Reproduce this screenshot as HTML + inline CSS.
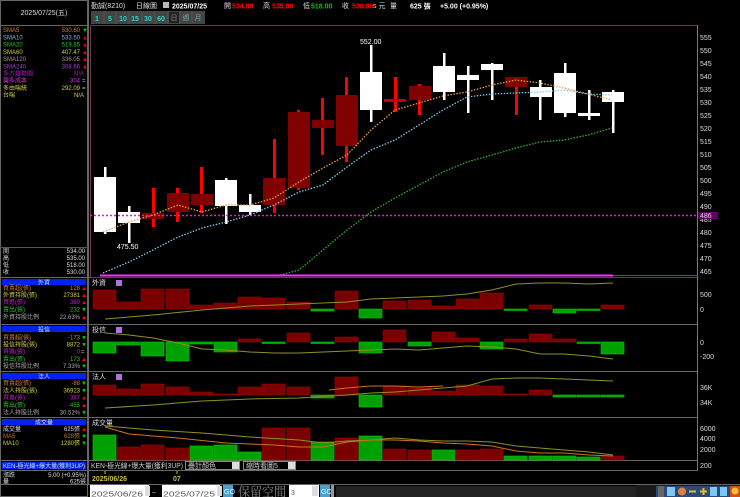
<!DOCTYPE html>
<html><head><meta charset="utf-8"><style>
html,body{margin:0;padding:0;background:#000;width:740px;height:497px;overflow:hidden}
svg{display:block}
text{font-family:"Liberation Sans","Noto Sans CJK TC",sans-serif;font-size:7px}
.r{fill:#7a0000;stroke:#a00000;stroke-width:.6}
.g{fill:#00a000;stroke:#00cc00;stroke-width:.6}
.w{fill:#fff}
.rw{fill:#f00}
.ax{fill:#ddd;font-size:7.5px}
.lt{fill:#ddd}
.lp text{font-size:6px}
</style></head><body>
<svg width="740" height="497" viewBox="0 0 740 497" xmlns="http://www.w3.org/2000/svg">
<rect width="740" height="497" fill="#000"/>
<rect x="0.5" y="0.5" width="87" height="496" fill="none" stroke="#666"/>
<line x1="0" y1="25.5" x2="88" y2="25.5" stroke="#666"/>
<text x="44" y="15" text-anchor="middle" class="lt">2025/07/25(五)</text>
<g class="lp">
<text x="3" y="32" fill="#d08030">SMA5</text><text x="80" y="32" text-anchor="end" fill="#d08030">530.60</text><text x="82" y="32" fill="#0c0">▼</text>
<text x="3" y="39.5" fill="#80b8e0">SMA10</text><text x="80" y="39.5" text-anchor="end" fill="#80b8e0">533.50</text><text x="82" y="39.5" fill="#f00">▲</text>
<text x="3" y="46.5" fill="#30c030">SMA20</text><text x="80" y="46.5" text-anchor="end" fill="#30c030">519.85</text><text x="82" y="46.5" fill="#f00">▲</text>
<text x="3" y="54" fill="#d0d040">SMA60</text><text x="80" y="54" text-anchor="end" fill="#d0d040">407.47</text><text x="82" y="54" fill="#f00">▲</text>
<text x="3" y="61" fill="#b09090">SMA120</text><text x="80" y="61" text-anchor="end" fill="#b09090">336.05</text><text x="82" y="61" fill="#f00">▲</text>
<text x="3" y="68.5" fill="#a040d0">SMA240</text><text x="80" y="68.5" text-anchor="end" fill="#a040d0">308.66</text><text x="82" y="68.5" fill="#f00">▲</text>
<text x="3" y="75.5" fill="#a020c0">多方趨勢圖</text><text x="84" y="75.5" text-anchor="end" fill="#a020c0">N/A</text>
<text x="3" y="82.5" fill="#d030d0">籌多成本</text><text x="80" y="82.5" text-anchor="end" fill="#d030d0">304</text><text x="82" y="82.5" fill="#ccc">=</text>
<text x="3" y="90" fill="#d0d040">多由喘統</text><text x="80" y="90" text-anchor="end" fill="#d0d040">292.09</text><text x="82" y="90" fill="#ccc">=</text>
<text x="3" y="97" fill="#d0d040">台喘</text><text x="84" y="97" text-anchor="end" fill="#d0d040">N/A</text>
<text x="3" y="253" fill="#ddd">開</text><text x="85" y="253" text-anchor="end" fill="#ddd">534.00</text>
<text x="3" y="260" fill="#ddd">高</text><text x="85" y="260" text-anchor="end" fill="#ddd">535.00</text>
<text x="3" y="267" fill="#ddd">低</text><text x="85" y="267" text-anchor="end" fill="#ddd">518.00</text>
<text x="3" y="274" fill="#ddd">收</text><text x="85" y="274" text-anchor="end" fill="#ddd">530.00</text>
</g>
<line x1="0" y1="247.5" x2="88" y2="247.5" stroke="#555"/>
<g stroke="#666">
<line x1="0" y1="277.5" x2="698" y2="277.5"/>
<line x1="0" y1="324.5" x2="698" y2="324.5"/>
<line x1="0" y1="371.5" x2="698" y2="371.5"/>
<line x1="0" y1="417.5" x2="698" y2="417.5"/>
<line x1="0" y1="460.5" x2="698" y2="460.5"/>
<line x1="0" y1="470.5" x2="698" y2="470.5"/>
<line x1="0" y1="484.5" x2="740" y2="484.5"/>
</g>
<g class="lp">
<rect x="2" y="279" width="84" height="6" fill="#0022ee"/><text x="44" y="284.5" text-anchor="middle" fill="#ddd">外資</text>
<text x="3" y="290" fill="#d08030">買賣超(張)</text><text x="80" y="290" text-anchor="end" fill="#d08030">128</text><text x="81" y="290" fill="#f00">▲</text>
<text x="3" y="297" fill="#d0d040">外資持股(張)</text><text x="80" y="297" text-anchor="end" fill="#d0d040">27381</text><text x="81" y="297" fill="#f00">▲</text>
<text x="3" y="304" fill="#c020c0">買進(張)</text><text x="80" y="304" text-anchor="end" fill="#c020c0">360</text><text x="81" y="304" fill="#f00">▲</text>
<text x="3" y="311.5" fill="#30c030">賣出(張)</text><text x="80" y="311.5" text-anchor="end" fill="#30c030">232</text><text x="81" y="311.5" fill="#0c0">▼</text>
<text x="3" y="319" fill="#aaa">外資持股比例</text><text x="80" y="319" text-anchor="end" fill="#aaa">22.63%</text><text x="81" y="319" fill="#f00">▲</text>

<rect x="2" y="326" width="84" height="6" fill="#0022ee"/><text x="44" y="331.5" text-anchor="middle" fill="#ddd">投信</text>
<text x="3" y="339.5" fill="#d08030">買賣超(張)</text><text x="80" y="339.5" text-anchor="end" fill="#d08030">-173</text><text x="81" y="339.5" fill="#0c0">▼</text>
<text x="3" y="346.5" fill="#d0d040">投信持股(張)</text><text x="80" y="346.5" text-anchor="end" fill="#d0d040">8872</text><text x="81" y="346.5" fill="#0c0">▼</text>
<text x="3" y="353.5" fill="#c020c0">買進(張)</text><text x="80" y="353.5" text-anchor="end" fill="#c020c0">0</text><text x="81" y="353.5" fill="#ccc">=</text>
<text x="3" y="361" fill="#30c030">賣出(張)</text><text x="80" y="361" text-anchor="end" fill="#30c030">173</text><text x="81" y="361" fill="#f00">▲</text>
<text x="3" y="368" fill="#aaa">投信持股比例</text><text x="80" y="368" text-anchor="end" fill="#aaa">7.33%</text><text x="81" y="368" fill="#0c0">▼</text>

<rect x="2" y="373" width="84" height="6" fill="#0022ee"/><text x="44" y="378.5" text-anchor="middle" fill="#ddd">法人</text>
<text x="3" y="385" fill="#d08030">買賣超(張)</text><text x="80" y="385" text-anchor="end" fill="#d08030">-88</text><text x="81" y="385" fill="#0c0">▼</text>
<text x="3" y="392.5" fill="#d0d040">法人持股(張)</text><text x="80" y="392.5" text-anchor="end" fill="#d0d040">36923</text><text x="81" y="392.5" fill="#0c0">▼</text>
<text x="3" y="399.5" fill="#c020c0">買進(張)</text><text x="80" y="399.5" text-anchor="end" fill="#c020c0">367</text><text x="81" y="399.5" fill="#f00">▲</text>
<text x="3" y="407" fill="#30c030">賣出(張)</text><text x="80" y="407" text-anchor="end" fill="#30c030">455</text><text x="81" y="407" fill="#f00">▲</text>
<text x="3" y="414.5" fill="#aaa">法人持股比例</text><text x="80" y="414.5" text-anchor="end" fill="#aaa">30.52%</text><text x="81" y="414.5" fill="#0c0">▼</text>

<rect x="2" y="419" width="84" height="6" fill="#0022ee"/><text x="44" y="424.5" text-anchor="middle" fill="#ddd">成交量</text>
<text x="3" y="431" fill="#ddd">成交量</text><text x="80" y="431" text-anchor="end" fill="#ddd">625張</text><text x="81" y="431" fill="#f00">▲</text>
<text x="3" y="438" fill="#d07020">MA5</text><text x="80" y="438" text-anchor="end" fill="#d07020">628張</text><text x="81" y="438" fill="#0c0">▼</text>
<text x="3" y="445" fill="#d0d040">MA10</text><text x="80" y="445" text-anchor="end" fill="#d0d040">1280張</text><text x="81" y="445" fill="#0c0">▼</text>

<rect x="2" y="462" width="84" height="7" fill="#0022ee"/><text x="3" y="468" fill="#ddd" textLength="82" lengthAdjust="spacingAndGlyphs">KEN-極光線+爆大量(獲利3UP)</text>
<text x="3" y="477" fill="#ddd">漲跌</text><text x="86" y="477" text-anchor="end" fill="#ddd">5.00 (+0.95%)</text>
<text x="3" y="483.5" fill="#ddd">量</text><text x="86" y="483.5" text-anchor="end" fill="#ddd">625張</text>
</g>
<line x1="88.5" y1="0" x2="88.5" y2="484" stroke="#666"/>

<text x="91" y="8" fill="#ddd">勤誠(8210)</text>
<text x="136" y="8" fill="#ddd">日線圖</text>
<rect x="163" y="2" width="6" height="6" fill="#bbb"/>
<text x="172" y="8.5" fill="#fff" font-weight="bold" font-size="9">2025/07/25</text>
<text x="224" y="8" fill="#ddd">開</text><text x="232" y="8.5" fill="#f00" font-weight="bold" font-size="8.5">534.00</text>
<text x="263" y="8" fill="#ddd">高</text><text x="272" y="8.5" fill="#f00" font-weight="bold" font-size="8.5">535.00</text>
<text x="303" y="8" fill="#ddd">低</text><text x="311" y="8.5" fill="#0c0" font-weight="bold" font-size="8.5">518.00</text>
<text x="342" y="8" fill="#ddd">收</text><text x="352" y="8.5" fill="#f00" font-weight="bold" font-size="8.5">530.00</text>
<text x="373" y="8" fill="#ddd">s 元</text><text x="390" y="8" fill="#ddd">量</text>
<text x="410" y="8.5" fill="#fff" font-weight="bold" font-size="8.5">625 張</text>
<text x="440" y="8.5" fill="#fff" font-weight="bold" font-size="8.5">+5.00 (+0.95%)</text>
<rect x="91" y="11" width="114" height="13" fill="#444"/>
<g fill="#3cc" font-size="8" font-weight="bold" text-anchor="middle">
<text x="97" y="21">1</text><text x="110" y="21">5</text><text x="123" y="21">10</text><text x="135" y="21">15</text><text x="148" y="21">30</text><text x="161" y="21">60</text>
</g>
<rect x="169" y="12" width="10" height="11" fill="#222"/><text x="174" y="20" text-anchor="middle" fill="#888" font-size="5">日</text>
<text x="186" y="20" text-anchor="middle" fill="#6aa" font-size="6">週</text><text x="198" y="20" text-anchor="middle" fill="#6aa" font-size="6">月</text>
<g stroke="#555"><line x1="104" y1="11" x2="104" y2="24"/><line x1="116" y1="11" x2="116" y2="24"/><line x1="129" y1="11" x2="129" y2="24"/><line x1="142" y1="11" x2="142" y2="24"/><line x1="155" y1="11" x2="155" y2="24"/><line x1="168" y1="11" x2="168" y2="24"/><line x1="180" y1="11" x2="180" y2="24"/><line x1="192" y1="11" x2="192" y2="24"/></g>

<rect x="90.5" y="25.5" width="607" height="252" fill="none" stroke="#6a3a4a"/>
<line x1="697.5" y1="25" x2="697.5" y2="470" stroke="#777"/>
<g class="ax">
<text x="700" y="40">555</text><text x="700" y="53">550</text><text x="700" y="66">545</text><text x="700" y="79">540</text><text x="700" y="92">535</text><text x="700" y="105">530</text><text x="700" y="118">525</text><text x="700" y="131">520</text><text x="700" y="144">515</text><text x="700" y="157">510</text><text x="700" y="170">505</text><text x="700" y="183">500</text><text x="700" y="196">495</text><text x="700" y="209">490</text><text x="700" y="222">485</text><text x="700" y="235">480</text><text x="700" y="248">475</text><text x="700" y="261">470</text><text x="700" y="274">465</text>
</g>
<rect x="698" y="212" width="20" height="7" fill="#600060"/><text x="700" y="218" fill="#ddd" font-size="7">486</text>

<g>
<rect class="w" x="104" y="167" width="2.5" height="67"/>
<rect class="w" x="128" y="206" width="2.5" height="37"/>
<rect class="rw" x="152" y="188" width="3" height="39"/>
<rect class="rw" x="176" y="188" width="3" height="34"/>
<rect class="rw" x="200" y="167" width="3" height="46"/>
<rect class="w" x="225" y="178" width="2.5" height="46"/>
<rect class="w" x="249" y="194" width="2.5" height="21"/>
<rect class="rw" x="273" y="139" width="3" height="74"/>
<rect class="rw" x="297" y="110" width="3" height="80"/>
<rect class="rw" x="321" y="98" width="3" height="57"/>
<rect class="rw" x="345" y="77" width="3" height="85"/>
<rect class="w" x="370" y="45" width="2.5" height="77"/>
<rect class="rw" x="394" y="77" width="3" height="35"/>
<rect class="rw" x="418" y="84" width="3" height="31"/>
<rect class="w" x="443" y="53" width="2.5" height="47"/>
<rect class="w" x="467" y="66" width="2.5" height="47"/>
<rect class="w" x="491" y="63" width="2.5" height="37"/>
<rect class="rw" x="515" y="77" width="3" height="38"/>
<rect class="w" x="539" y="80" width="2.5" height="40"/>
<rect class="w" x="564" y="63" width="2.5" height="54"/>
<rect class="w" x="588" y="90" width="2.5" height="30"/>
<rect class="w" x="612" y="90" width="2.5" height="43"/>
</g>
<g>
<rect class="w" x="94" y="177" width="22" height="55"/>
<rect class="w" x="118" y="212" width="22" height="11"/>
<rect fill="#800000" x="142" y="213" width="22" height="6"/>
<rect fill="#800000" x="167" y="193" width="22" height="19"/>
<rect fill="#800000" x="191" y="194" width="22" height="11"/>
<rect class="w" x="215" y="180" width="22" height="26"/>
<rect class="w" x="239" y="205" width="22" height="7"/>
<rect fill="#800000" x="263" y="178" width="22" height="27"/>
<rect fill="#800000" x="288" y="112" width="22" height="76"/>
<rect fill="#800000" x="312" y="120" width="22" height="8"/>
<rect fill="#800000" x="336" y="95" width="22" height="51"/>
<rect class="w" x="360" y="72" width="22" height="38"/>
<rect fill="#c00000" x="384" y="99" width="22" height="3"/>
<rect fill="#800000" x="409" y="86" width="22" height="14"/>
<rect class="w" x="433" y="66" width="22" height="26"/>
<rect class="w" x="457" y="75" width="22" height="5"/>
<rect class="w" x="481" y="64" width="22" height="6"/>
<rect fill="#800000" x="505" y="77" width="22" height="10"/>
<rect class="w" x="530" y="87" width="22" height="10"/>
<rect class="w" x="554" y="73" width="22" height="40"/>
<rect class="w" x="578" y="113" width="22" height="3"/>
<rect class="w" x="602" y="92" width="22" height="10"/>
</g>
<text x="360" y="44" fill="#fff" font-size="7.5">552.00</text>
<text x="117" y="249" fill="#fff" font-size="7.5">475.50</text>
<line x1="90" y1="215.5" x2="698" y2="215.5" stroke="#e020c0" stroke-width="1.6" stroke-dasharray="2,2"/>
<polyline fill="none" stroke="#e8a040" stroke-width="1.3" stroke-dasharray="1.5,1.5" points="103,232 129,222 153,215 178,205 202,212 226,205 250,205 274,198 299,182 323,168 347,155 371,130 395,110 419,103 443,96 467,92 492,85 516,80 540,83 564,88 588,94 612,100"/>
<polyline fill="none" stroke="#80c8e8" stroke-width="1.3" stroke-dasharray="1.5,1.5" points="103,273 129,262 153,250 178,237 202,228 226,222 250,215 274,205 299,192 323,185 347,167 371,150 395,140 419,125 443,110 467,97 492,94 516,93 540,92 564,90 588,94 612,95"/>
<polyline fill="none" stroke="#30b030" stroke-width="1.3" stroke-dasharray="1.5,1.5" points="280,275 299,270 323,250 347,230 371,212 395,198 419,185 443,172 467,162 492,155 516,148 540,142 564,140 588,135 612,128"/>
<line x1="100" y1="275.5" x2="613" y2="275.5" stroke="#ff30ff" stroke-width="2"/>
<line x1="613" y1="275.5" x2="698" y2="275.5" stroke="#a020a0" stroke-width="1"/>

<g fill="#ddd" font-size="6.5">
<text x="92" y="285">外資</text><text x="92" y="332">投信</text><text x="92" y="379">法人</text><text x="92" y="425">成交量</text>
</g>
<rect x="116" y="280" width="6" height="6" fill="#b070e0"/>
<rect x="116" y="327" width="6" height="6" fill="#b070e0"/>
<rect x="116" y="374" width="6" height="6" fill="#b070e0"/>

<g>
<rect class="r" x="93" y="290" width="23" height="19"/>
<rect class="r" x="117" y="302" width="23" height="7"/>
<rect class="r" x="141" y="289" width="23" height="20"/>
<rect class="r" x="166" y="289" width="23" height="20"/>
<rect class="r" x="190" y="305" width="23" height="4"/>
<rect class="r" x="214" y="303" width="23" height="6"/>
<rect class="r" x="238" y="297" width="23" height="12"/>
<rect class="r" x="262" y="298" width="23" height="11"/>
<rect class="r" x="287" y="302" width="23" height="7"/>
<rect class="g" x="311" y="309" width="23" height="2"/>
<rect class="r" x="335" y="291" width="23" height="18"/>
<rect class="g" x="359" y="309" width="23" height="9"/>
<rect class="r" x="383" y="301" width="23" height="8"/>
<rect class="r" x="408" y="300" width="23" height="9"/>
<rect class="r" x="432" y="306" width="23" height="3"/>
<rect class="r" x="456" y="299" width="23" height="10"/>
<rect class="r" x="480" y="293" width="23" height="16"/>
<rect class="g" x="504" y="309" width="23" height="1.5"/>
<rect class="r" x="529" y="305" width="23" height="4"/>
<rect class="g" x="553" y="309" width="23" height="4"/>
<rect class="g" x="577" y="309" width="23" height="1.5"/>
<rect class="r" x="601" y="305" width="23" height="4"/>
</g>
<polyline fill="none" stroke="#909020" stroke-width="1" points="105,319 153,315 202,310 250,306 299,304 347,302 371,299 395,298 443,296 467,294 492,290 516,284 540,283 564,283 589,284 613,283"/>
<g>
<rect class="g" x="93" y="342" width="23" height="11"/>
<rect class="g" x="117" y="342" width="23" height="3"/>
<rect class="g" x="141" y="342" width="23" height="14"/>
<rect class="g" x="166" y="342" width="23" height="19"/>
<rect class="g" x="190" y="342" width="23" height="2"/>
<rect class="g" x="214" y="342" width="23" height="10"/>
<rect class="r" x="238" y="339" width="23" height="3"/>
<rect class="g" x="262" y="342" width="23" height="1.5"/>
<rect class="r" x="287" y="333" width="23" height="9"/>
<rect class="g" x="311" y="342" width="23" height="1.5"/>
<rect class="r" x="335" y="337" width="23" height="5"/>
<rect class="g" x="359" y="342" width="23" height="11"/>
<rect class="r" x="383" y="330" width="23" height="12"/>
<rect class="g" x="408" y="342" width="23" height="4"/>
<rect class="r" x="432" y="332" width="23" height="10"/>
<rect class="r" x="456" y="338" width="23" height="4"/>
<rect class="g" x="480" y="342" width="23" height="7"/>
<rect class="r" x="504" y="339" width="23" height="3"/>
<rect class="r" x="529" y="334" width="23" height="8"/>
<rect class="r" x="553" y="339" width="23" height="3"/>
<rect class="g" x="577" y="342" width="23" height="1.5"/>
<rect class="g" x="601" y="342" width="23" height="12"/>
</g>
<polyline fill="none" stroke="#909020" stroke-width="1" points="105,333 129,335 153,338 178,343 202,349 226,350 250,352 274,353 299,353 323,352 347,351 371,350 395,349 419,350 443,348 467,346 492,347 516,349 540,354 564,354 589,356 613,359"/>
<g>
<rect class="r" x="93" y="385" width="23" height="10"/>
<rect class="r" x="117" y="389" width="23" height="6"/>
<rect class="r" x="141" y="384" width="23" height="11"/>
<rect class="r" x="166" y="387" width="23" height="8"/>
<rect class="r" x="190" y="392" width="23" height="3"/>
<rect class="r" x="214" y="394" width="23" height="1"/>
<rect class="r" x="238" y="387" width="23" height="8"/>
<rect class="r" x="262" y="384" width="23" height="11"/>
<rect class="r" x="287" y="387" width="23" height="8"/>
<rect class="g" x="311" y="395" width="23" height="3"/>
<rect class="r" x="335" y="377" width="23" height="18"/>
<rect class="g" x="359" y="395" width="23" height="12"/>
<rect class="r" x="383" y="386" width="23" height="9"/>
<rect class="r" x="408" y="388" width="23" height="7"/>
<rect class="r" x="432" y="391" width="23" height="4"/>
<rect class="r" x="456" y="385" width="23" height="10"/>
<rect class="r" x="480" y="386" width="23" height="9"/>
<rect class="r" x="504" y="394" width="23" height="1"/>
<rect class="r" x="529" y="390" width="23" height="5"/>
<rect class="g" x="553" y="395" width="23" height="2"/>
<rect class="g" x="577" y="395" width="23" height="2"/>
<rect class="g" x="601" y="395" width="23" height="2"/>
</g>
<polyline fill="none" stroke="#909020" stroke-width="1" points="105,408 153,405 202,401 250,399 299,398 347,395 371,393 395,392 419,390 443,388 467,386 492,379 516,378 540,378 564,379 589,380 613,381"/>
<polyline fill="none" stroke="#d07020" stroke-width="1" points="329,390 347,388 371,386 395,386 419,387 443,386"/>
<g>
<rect class="g" x="93" y="435" width="23" height="25"/>
<rect class="r" x="117" y="447" width="23" height="13"/>
<rect class="r" x="141" y="445" width="23" height="15"/>
<rect class="r" x="166" y="448" width="23" height="12"/>
<rect class="g" x="190" y="446" width="23" height="14"/>
<rect class="g" x="214" y="445" width="23" height="15"/>
<rect class="g" x="238" y="452" width="23" height="8"/>
<rect class="r" x="262" y="428" width="23" height="32"/>
<rect class="r" x="287" y="428" width="23" height="32"/>
<rect class="g" x="311" y="442" width="23" height="18"/>
<rect class="r" x="335" y="438" width="23" height="22"/>
<rect class="g" x="359" y="436" width="23" height="24"/>
<rect class="r" x="383" y="449" width="23" height="11"/>
<rect class="r" x="408" y="450" width="23" height="10"/>
<rect class="g" x="432" y="450" width="23" height="10"/>
<rect class="r" x="456" y="450" width="23" height="10"/>
<rect class="r" x="480" y="449" width="23" height="11"/>
<rect class="g" x="504" y="456" width="23" height="4"/>
<rect class="g" x="529" y="456" width="23" height="4"/>
<rect class="g" x="553" y="456" width="23" height="4"/>
<rect class="g" x="577" y="457" width="23" height="3"/>
<rect class="r" x="601" y="456" width="23" height="4"/>
</g>
<polyline fill="none" stroke="#909020" stroke-width="1" points="105,426 153,430 202,433 250,437 299,440 323,443 347,441 371,440 395,438 419,440 443,441 467,441 492,442 516,446 540,448 564,450 589,452 613,455"/>
<polyline fill="none" stroke="#d07020" stroke-width="1" points="105,427 129,434 178,438 226,443 274,445 299,447 323,447 347,442 371,440 395,440 419,441 443,443 467,444 492,446 516,451 540,453 564,453 589,455 613,456"/>
<g class="ax">
<text x="700" y="297">500</text><text x="700" y="312">0</text>
<text x="700" y="345">0</text><text x="700" y="359">-200</text>
<text x="700" y="390">36K</text><text x="700" y="405">34K</text>
<text x="700" y="431">6000</text><text x="700" y="441">4000</text><text x="700" y="452">2000</text><text x="700" y="468">200</text>
</g>
<text x="91" y="468" fill="#ccc" font-size="6" textLength="92" lengthAdjust="spacingAndGlyphs">KEN-極光線+爆大量(獲利3UP)</text>
<rect x="185.5" y="461.5" width="54" height="8" fill="#000" stroke="#888"/><text x="188" y="468" fill="#ccc" font-size="6">疊計顏色</text><rect x="232" y="462" width="7" height="7" fill="#ddd"/>
<rect x="243.5" y="461.5" width="52" height="8" fill="#000" stroke="#888"/><text x="246" y="468" fill="#ccc" font-size="6">縮時看圖5</text><rect x="288" y="462" width="7" height="7" fill="#ddd"/>
<line x1="105" y1="471" x2="105" y2="474" stroke="#cc0"/><line x1="177" y1="471" x2="177" y2="474" stroke="#cc0"/>
<text x="92" y="481" fill="#c8c040" font-size="7.5" font-weight="bold">2025/06/26</text>
<text x="173" y="481" fill="#c8c040" font-size="7.5" font-weight="bold">07</text>
<rect x="90" y="485" width="59" height="12" fill="#fff"/><text x="91" y="496.5" fill="#555" font-size="12" textLength="52" lengthAdjust="spacingAndGlyphs">2025/06/26</text><rect x="145" y="486" width="5" height="10" fill="#ddd"/>
<text x="152" y="495" fill="#ccc" font-size="9">~</text>
<rect x="162" y="485" width="58" height="12" fill="#fff"/><text x="163" y="496.5" fill="#555" font-size="12" textLength="52" lengthAdjust="spacingAndGlyphs">2025/07/25</text><rect x="217" y="486" width="5" height="10" fill="#ddd"/>
<rect x="223" y="485" width="10" height="12" fill="#4aa0d0"/><text x="224" y="494" fill="#dff" font-size="6">GO</text>
<text x="238" y="496.5" fill="#888" style="font-size:13px;font-family:'Noto Serif CJK SC','Noto Sans CJK TC',serif" textLength="48" lengthAdjust="spacingAndGlyphs">保留空間</text>
<rect x="289" y="485" width="30" height="12" fill="#fff"/><text x="291" y="495" fill="#555" font-size="9">3</text><rect x="312" y="486" width="6" height="10" fill="#ddd"/>
<rect x="320" y="485" width="10" height="12" fill="#4aa0d0"/><text x="321" y="494" fill="#dff" font-size="6">GO</text>
<rect x="331" y="485" width="3" height="12" fill="#999"/>
<rect x="336" y="486" width="320" height="11" fill="#222"/>
<rect x="636" y="485" width="104" height="12" fill="#1a1a1a"/>
<rect x="656" y="486" width="84" height="11" fill="#2a4a7a"/>
<rect x="658" y="486" width="6" height="11" fill="#666"/>
<g fill="#7cc8f0"><rect x="667" y="487" width="8" height="9"/><circle cx="682" cy="491.5" r="4" fill="#e08040"/><rect x="689" y="490.5" width="7" height="2" fill="#e0c030"/><rect x="700" y="490.5" width="7" height="2" fill="#e0c030"/><rect x="702.5" y="488" width="2" height="7" fill="#e0c030"/><rect x="710" y="487" width="7" height="9"/><rect x="720" y="487" width="7" height="9"/></g>
<rect x="730" y="486" width="10" height="11" fill="#d05020"/><circle cx="735" cy="491" r="3.5" fill="#f0c030"/>
</svg>
</body></html>
